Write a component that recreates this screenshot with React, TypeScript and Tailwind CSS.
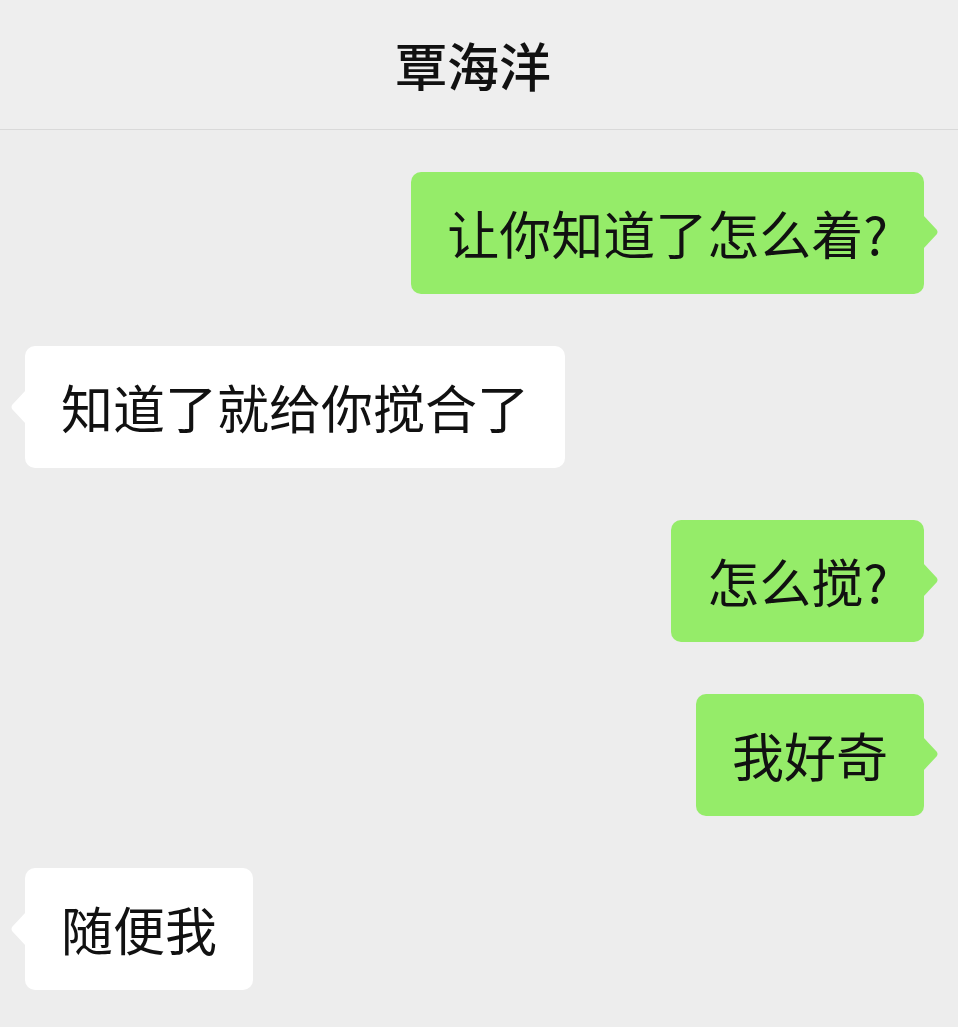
import React from 'react';

type Msg = { text: string; mine: boolean };

const messages: Msg[] = [
  { text: '让你知道了怎么着?', mine: true },
  { text: '知道了就给你搅合了', mine: false },
  { text: '怎么搅?', mine: true },
  { text: '我好奇', mine: true },
  { text: '随便我', mine: false },
];

// little speech tail, drawn on the bubble's edge
function Tail({ mine }: { mine: boolean }) {
  if (mine) {
    return (
      <svg
        className="absolute top-[43px] right-[-15px]"
        width="16"
        height="34"
        viewBox="0 0 16 34"
      >
        <path d="M0 0 L13.5 14.5 Q15.5 17 13.5 19.5 L0 34 Z" fill="#95ec69" />
      </svg>
    );
  }
  return (
    <svg
      className="absolute top-[44px] left-[-15px]"
      width="16"
      height="34"
      viewBox="0 0 16 34"
    >
      <path d="M16 0 L2.5 14.5 Q0.5 17 2.5 19.5 L16 34 Z" fill="#ffffff" />
    </svg>
  );
}

function Bubble({ msg }: { msg: Msg }) {
  return (
    <div className={msg.mine ? 'flex justify-end pr-[34px]' : 'flex justify-start pl-[25px]'}>
      <div
        className={`relative rounded-[10px] px-[36px] py-[35px] text-[52px] leading-[52px] text-[#111111] whitespace-nowrap ${
          msg.mine ? 'bg-[#95ec69]' : 'bg-white'
        }`}
      >
        {msg.text}
        <Tail mine={msg.mine} />
      </div>
    </div>
  );
}

export default function App() {
  return (
    <div
      className="w-[958px] h-[1027px] bg-[#ededed] overflow-hidden"
      style={{ fontFamily: '"Noto Sans CJK SC", "Noto Sans", sans-serif' }}
    >
      <div className="h-[130px] flex items-center justify-center border-b border-[#d9d9d9] bg-[#eeeeee]">
        <h1 className="text-[52px] font-medium text-[#111111] leading-none pr-[12px]">覃海洋</h1>
      </div>
      <div className="flex flex-col gap-[52px] pt-[42px]">
        {messages.map((m, i) => (
          <Bubble key={i} msg={m} />
        ))}
      </div>
    </div>
  );
}
